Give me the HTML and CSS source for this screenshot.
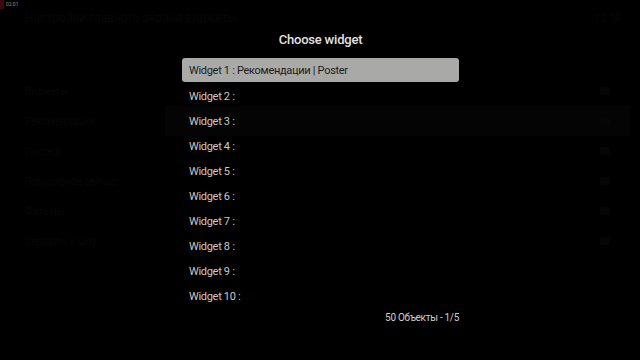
FILE: index.html
```html
<!DOCTYPE html>
<html lang="ru">
<head>
<meta charset="utf-8">
<title>Choose widget</title>
<link rel="stylesheet" href="styles.css">
</head>
<body>
<div class="screen">
  <div class="bg">
    <div class="bg-head">
      <span class="bg-title">Настройки главного экрана виджеты</span>
      <span class="bg-clock">10:14</span>
    </div>
    <div class="bg-rows">
      <div class="bg-row"><span>Виджеты</span><span class="bg-ic"></span></div>
      <div class="bg-row sel"><span>Рекомендации</span><span class="bg-ic"></span></div>
      <div class="bg-row"><span>Постер</span><span class="bg-ic"></span></div>
      <div class="bg-row"><span>Популярное сейчас</span><span class="bg-ic"></span></div>
      <div class="bg-row"><span>Фильмы</span><span class="bg-ic"></span></div>
      <div class="bg-row"><span>Сериалы и шоу</span><span class="bg-ic"></span></div>
    </div>
  </div>
  <div class="badge"><span class="badge-dot"></span><span class="badge-time">02:01</span></div>
  <div class="dialog">
    <h1 class="dialog-title">Choose widget</h1>
    <ul class="list">
      <li class="item active">Widget 1 : Рекомендации | Poster</li>
      <li class="item">Widget 2 :</li>
      <li class="item">Widget 3 :</li>
      <li class="item">Widget 4 :</li>
      <li class="item">Widget 5 :</li>
      <li class="item">Widget 6 :</li>
      <li class="item">Widget 7 :</li>
      <li class="item">Widget 8 :</li>
      <li class="item">Widget 9 :</li>
      <li class="item">Widget 10 :</li>
    </ul>
    <div class="footer">50 Объекты - 1/5</div>
  </div>
</div>
</body>
</html>
```
FILE: styles.css
```css
* { box-sizing: border-box; margin: 0; padding: 0; }
html, body { width: 640px; height: 360px; background: #000; overflow: hidden; }
body { font-family: Roboto, "Noto Sans", sans-serif; color: #d0d0d0; }
.screen { position: relative; width: 640px; height: 360px; background: #000; }

.bg { display: flex; flex-direction: column; padding: 10px 10px 0 25px; color: #070707; font-size: 10px; }
.bg-head { display: flex; justify-content: space-between; align-items: center; height: 16px; }
.bg-title { font-size: 12px; }
.bg-clock { margin-right: 10px; }
.bg-rows { display: flex; flex-direction: column; margin-top: 50px; margin-left: -10px; }
.bg-row { display: flex; justify-content: space-between; align-items: center; height: 30px; padding: 0 20px 0 10px; }
.bg-row.sel { background: linear-gradient(to right, #000 0, #000 150px, #030403 150px); }
.bg-ic { width: 10px; height: 8px; background: #060606; border-radius: 2px; }

.badge { position: absolute; left: 0; top: 0; display: flex; align-items: center; gap: 2px; height: 9px; }
.badge-dot { width: 4px; height: 9px; background: #3a0a0c; }
.badge-time { font-size: 5px; color: #8a8a8a; line-height: 9px; }

.dialog { position: absolute; left: 182px; top: 30px; width: 277px; display: flex; flex-direction: column; }
.dialog-title { font-size: 13px; font-weight: 500; letter-spacing: -0.2px; color: #e2e2e2; text-align: center; height: 20px; line-height: 20px; margin-bottom: 8px; }
.list { list-style: none; display: flex; flex-direction: column; }
.item { height: 25px; line-height: 24px; padding: 2px 0 0 7px; font-size: 11px; letter-spacing: -0.3px; color: #c8c8c8; border-radius: 3px; }
.item.active { background: #a9a9a7; color: #1c1c1c; height: 24px; line-height: 22px; margin-bottom: 1px; }
.footer { align-self: flex-end; font-size: 10px; letter-spacing: -0.3px; color: #cfcfcf; margin-top: 4px; }
```
